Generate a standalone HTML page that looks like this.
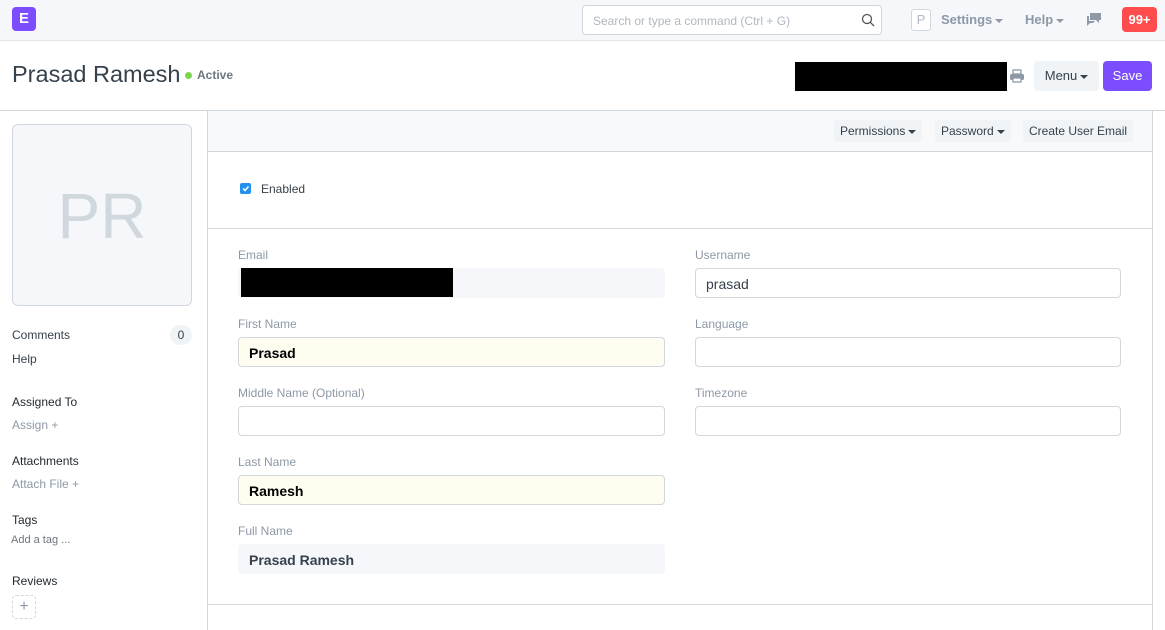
<!DOCTYPE html>
<html><head><meta charset="utf-8"><style>
*{box-sizing:border-box;margin:0;padding:0}
body{width:1165px;height:626px;overflow:hidden;background:#fff;font-family:"Liberation Sans",sans-serif;color:#1f272e;position:relative}
.abs{position:absolute}
.nav{left:0;top:0;width:1165px;height:41px;background:#f5f7fa;border-bottom:1px solid #e2e6e9}
.logo{left:12px;top:7px;width:24px;height:24px;background:#7b4dff;border-radius:4px;color:#fff;font-weight:bold;font-size:15px;text-align:center;line-height:24px}
.search{left:582px;top:5px;width:300px;height:30px;border:1px solid #d1d8dd;border-radius:4px;background:#fff;font-size:12px;color:#b0b8c0;padding:8px 10px}
.navt{font-size:13px;font-weight:bold;color:#8d99a6;top:12px}
.lbl{font-size:12px;color:#8d99a6}
.inp{height:30px;border:1px solid #d1d8dd;border-radius:4px;background:#fff;font-size:14px;padding:7px 10px;width:427px}
.btn{background:#f0f4f7;border-radius:3px;font-size:12px;color:#36414c;height:22px;line-height:22px;padding:0 6px;top:120px}
.side{font-size:12px;color:#36414c;left:12px}
.caret{display:inline-block;border-left:4px solid transparent;border-right:4px solid transparent;border-top:4px solid currentColor;vertical-align:middle;margin-left:3px}
</style></head><body>
<div class="abs nav"></div>
<div class="abs logo">E</div>
<div class="abs search">Search or type a command (Ctrl + G)
<svg style="position:absolute;right:6px;top:7px" width="14" height="14" viewBox="0 0 14 14"><circle cx="6" cy="6" r="4.5" fill="none" stroke="#555" stroke-width="1.3"/><line x1="9.3" y1="9.3" x2="13" y2="13" stroke="#555" stroke-width="1.3"/></svg></div>
<div class="abs" style="left:911px;top:9px;width:20px;height:22px;border:1px solid #d1d8dd;border-radius:3px;background:#fff;color:#b0b8c0;font-size:13px;text-align:center;line-height:20px">P</div>
<div class="abs navt" style="left:941px">Settings<span class="caret"></span></div>
<div class="abs navt" style="left:1025px">Help<span class="caret"></span></div>
<svg class="abs" style="left:1086px;top:12px" width="16" height="14" viewBox="0 0 16 14"><path d="M4 1h11v7h-2v3l-3-3H4z" fill="#8d99a6"/><path d="M1 4h2v5h6l-2 2H4l-3 3z" fill="#8d99a6"/></svg>
<div class="abs" style="left:1122px;top:7px;width:35px;height:25px;background:#ff4d4d;border-radius:4px;color:#fff;font-weight:bold;font-size:13px;text-align:center;line-height:25px">99+</div>

<div class="abs" style="left:12px;top:61px;font-size:23.5px;color:#36414c">Prasad Ramesh</div>
<div class="abs" style="left:185px;top:72px;width:7px;height:7px;border-radius:50%;background:#7cd44e"></div>
<div class="abs" style="left:197px;top:68px;font-size:12px;font-weight:bold;color:#6c7680">Active</div>
<div class="abs" style="left:795px;top:62px;width:212px;height:29px;background:#000"></div>
<svg class="abs" style="left:1009px;top:69px" width="16" height="14" viewBox="0 0 16 14"><rect x="4" y="1" width="8" height="4" fill="none" stroke="#8d99a6" stroke-width="1.3"/><rect x="1" y="5" width="14" height="6" rx="1.5" fill="#8d99a6"/><rect x="4" y="9" width="8" height="4" fill="#fff" stroke="#8d99a6" stroke-width="1.3"/></svg>
<div class="abs" style="left:1034px;top:61px;width:65px;height:30px;background:#f0f4f7;border-radius:4px;font-size:13px;color:#36414c;line-height:30px;text-align:center">Menu<span class="caret"></span></div>
<div class="abs" style="left:1103px;top:61px;width:49px;height:30px;background:#7b4dff;border-radius:4px;font-size:13px;color:#fff;line-height:30px;text-align:center">Save</div>
<div class="abs" style="left:0;top:110px;width:1165px;height:1px;background:#d1d8dd"></div>

<div class="abs" style="left:12px;top:124px;width:180px;height:182px;border:1px solid #d1d8dd;border-radius:6px;background:#f5f7fa;color:#d1d8dd;font-size:64px;text-align:center;line-height:182px">PR</div>
<div class="abs side" style="top:328px">Comments</div>
<div class="abs" style="left:170px;top:325px;width:22px;height:20px;background:#f0f4f7;border-radius:10px;font-size:12px;text-align:center;line-height:20px;color:#36414c">0</div>
<div class="abs side" style="top:352px">Help</div>
<div class="abs side" style="top:395px;color:#1f272e">Assigned To</div>
<div class="abs side" style="top:418px;color:#8d99a6">Assign +</div>
<div class="abs side" style="top:454px;color:#1f272e">Attachments</div>
<div class="abs side" style="top:477px;color:#8d99a6">Attach File +</div>
<div class="abs side" style="top:513px;color:#1f272e">Tags</div>
<div class="abs side" style="top:534px;left:11px;font-size:11px;color:#6c7680">Add a tag ...</div>
<div class="abs side" style="top:574px;color:#1f272e">Reviews</div>
<div class="abs" style="left:12px;top:595px;width:24px;height:24px;border:1px dashed #d1d8dd;border-radius:4px;color:#8d99a6;text-align:center;line-height:22px;font-size:16px">+</div>

<div class="abs" style="left:207px;top:110px;width:946px;height:520px;border-left:1px solid #d1d8dd;border-right:1px solid #d1d8dd"></div>
<div class="abs" style="left:208px;top:111px;width:944px;height:41px;background:#f8f9fa;border-bottom:1px solid #d1d8dd"></div>
<div class="abs btn" style="left:834px">Permissions<span class="caret"></span></div>
<div class="abs btn" style="left:935px">Password<span class="caret"></span></div>
<div class="abs btn" style="left:1023px">Create User Email</div>
<div class="abs" style="left:240px;top:183px;width:11px;height:11px;background:#2490ef;border-radius:2px"><svg width="11" height="11" viewBox="0 0 11 11" style="display:block"><path d="M3 5.5l2 2 3.5-4" fill="none" stroke="#fff" stroke-width="1.5"/></svg></div>
<div class="abs" style="left:261px;top:182px;font-size:12px;color:#36414c">Enabled</div>
<div class="abs" style="left:208px;top:228px;width:944px;height:1px;background:#d1d8dd"></div>

<div class="abs lbl" style="left:238px;top:248px">Email</div>
<div class="abs" style="left:238px;top:268px;width:427px;height:30px;background:#f5f7fa;border-radius:4px"></div>
<div class="abs" style="left:241px;top:268px;width:212px;height:29px;background:#000"></div>
<div class="abs lbl" style="left:238px;top:317px">First Name</div>
<div class="abs inp" style="left:238px;top:337px;background:#fffdf0;font-weight:bold;color:#000">Prasad</div>
<div class="abs lbl" style="left:238px;top:386px">Middle Name (Optional)</div>
<div class="abs inp" style="left:238px;top:406px"></div>
<div class="abs lbl" style="left:238px;top:455px">Last Name</div>
<div class="abs inp" style="left:238px;top:475px;background:#fffdf0;font-weight:bold;color:#000">Ramesh</div>
<div class="abs lbl" style="left:238px;top:524px">Full Name</div>
<div class="abs inp" style="left:238px;top:544px;background:#f5f7fa;border-color:#f5f7fa;font-weight:bold;color:#36414c">Prasad Ramesh</div>

<div class="abs lbl" style="left:695px;top:248px">Username</div>
<div class="abs inp" style="left:695px;top:268px;width:426px;color:#36414c">prasad</div>
<div class="abs lbl" style="left:695px;top:317px">Language</div>
<div class="abs inp" style="left:695px;top:337px;width:426px"></div>
<div class="abs lbl" style="left:695px;top:386px">Timezone</div>
<div class="abs inp" style="left:695px;top:406px;width:426px"></div>
<div class="abs" style="left:208px;top:604px;width:944px;height:1px;background:#d1d8dd"></div>
</body></html>
